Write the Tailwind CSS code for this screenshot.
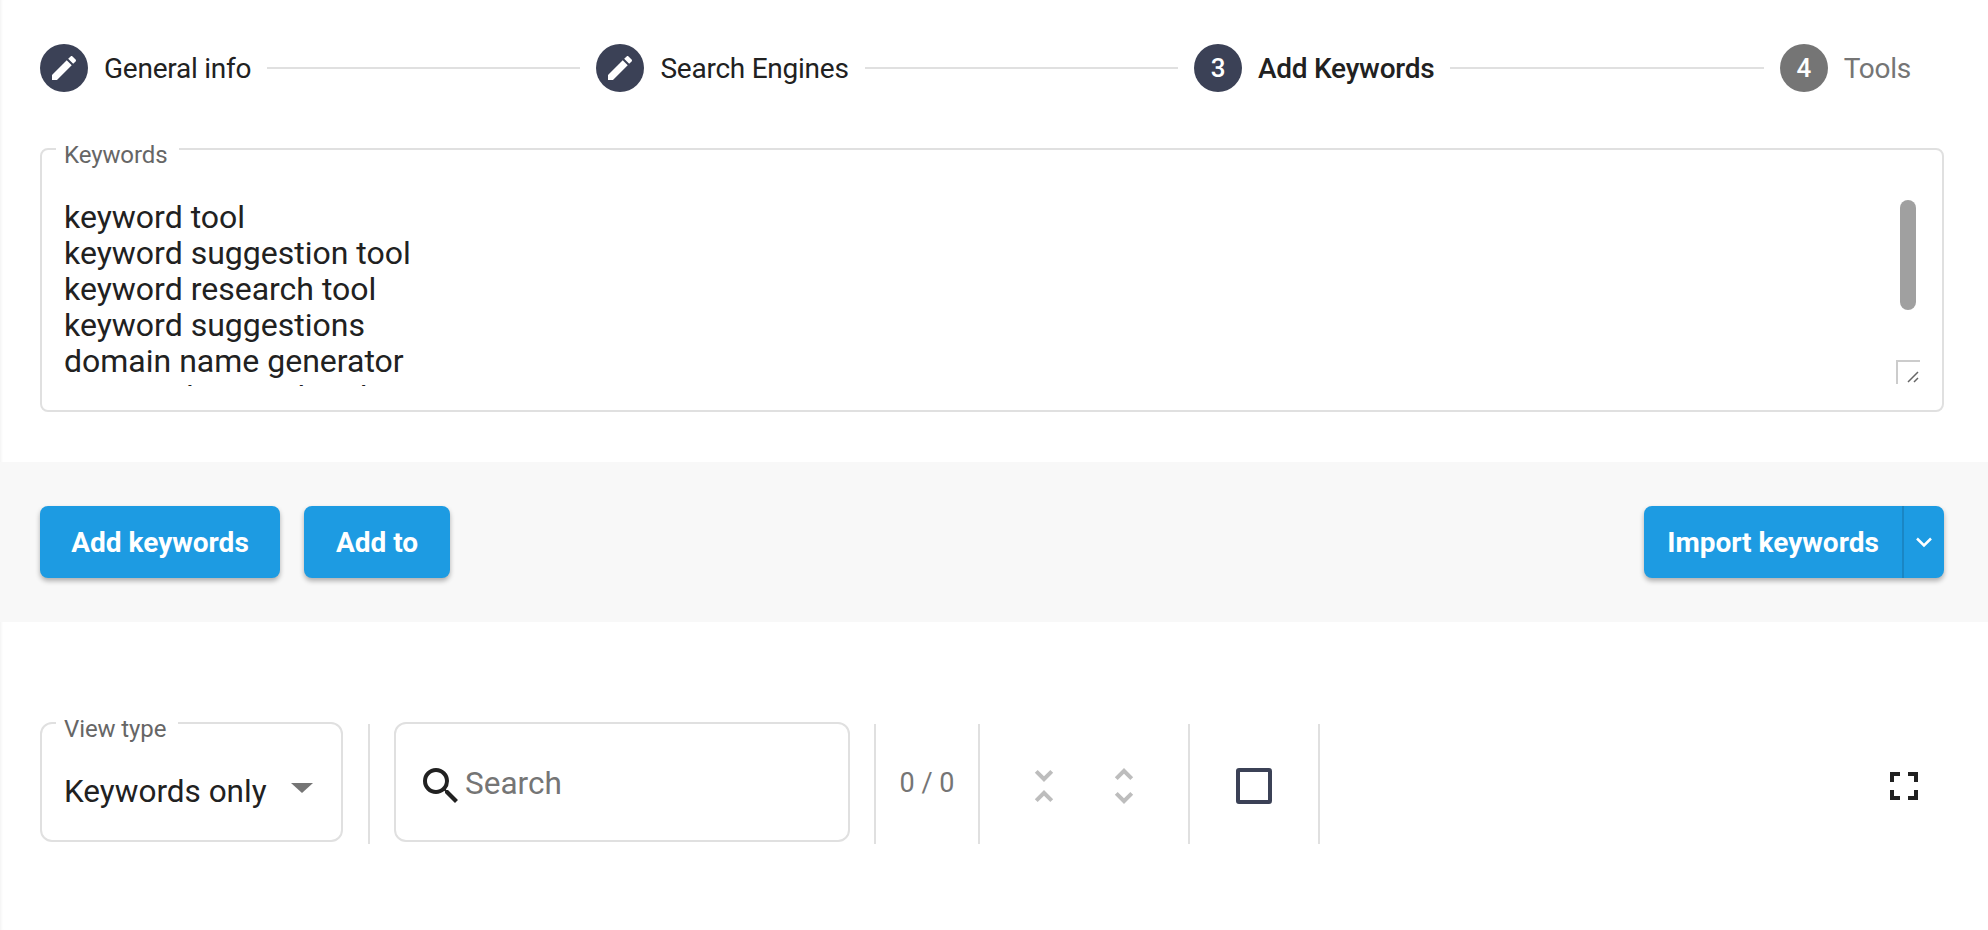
<!DOCTYPE html>
<html lang="en">
<head>
    <meta charset="UTF-8">
    <title>Add Keywords</title>
    <script src="https://cdn.jsdelivr.net/npm/@tailwindcss/browser@4"></script>
</head>
<body class="bg-white font-['Roboto',sans-serif] text-[#212121] h-[930px] overflow-hidden shadow-[inset_3px_0_3px_-2px_rgba(0,0,0,0.06)]">

    <!-- stepper -->
    <div class="flex items-center pt-[44px] pl-[40px] pr-[77px] text-[28px] tracking-[-0.25px]">
        <div class="flex items-center gap-4 shrink-0">
            <span class="w-12 h-12 rounded-full bg-[#3b4156] flex items-center justify-center">
                <svg class="w-8 h-8 fill-white" viewBox="0 0 24 24"><path d="M3 17.25V21h3.75L17.81 9.94l-3.75-3.75L3 17.25zM20.71 7.04c.39-.39.39-1.02 0-1.41l-2.34-2.34c-.39-.39-1.02-.39-1.41 0l-1.83 1.83 3.75 3.75 1.83-1.83z"/></svg>
            </span>
            <span class="pt-[2px]">General info</span>
        </div>
        <div class="flex-1 h-[2px] bg-[#e0e0e0] mx-4"></div>
        <div class="flex items-center gap-4 shrink-0">
            <span class="w-12 h-12 rounded-full bg-[#3b4156] flex items-center justify-center">
                <svg class="w-8 h-8 fill-white" viewBox="0 0 24 24"><path d="M3 17.25V21h3.75L17.81 9.94l-3.75-3.75L3 17.25zM20.71 7.04c.39-.39.39-1.02 0-1.41l-2.34-2.34c-.39-.39-1.02-.39-1.41 0l-1.83 1.83 3.75 3.75 1.83-1.83z"/></svg>
            </span>
            <span class="pt-[2px]">Search Engines</span>
        </div>
        <div class="flex-1 h-[2px] bg-[#e0e0e0] mx-4"></div>
        <div class="flex items-center gap-4 shrink-0">
            <span class="w-12 h-12 rounded-full bg-[#3b4156] text-white text-[26px] font-medium flex items-center justify-center">3</span>
            <span class="font-medium pt-[2px]">Add Keywords</span>
        </div>
        <div class="flex-1 h-[2px] bg-[#e0e0e0] mx-4"></div>
        <div class="flex items-center gap-4 shrink-0">
            <span class="w-12 h-12 rounded-full bg-[#757575] text-white text-[26px] font-medium flex items-center justify-center">4</span>
            <span class="text-[#757575] pt-[2px]">Tools</span>
        </div>
    </div>

    <!-- keywords textarea -->
    <div class="relative mt-[56px] ml-[40px] mr-[44px] h-[264px] border-2 border-[#e0e0e0] rounded-lg">
        <span class="absolute -top-[11px] left-[14px] pl-2 pr-3 bg-white text-[24px] tracking-[-0.1px] leading-[32px] text-[#666666]">Keywords</span>
        <div class="mt-[49px] ml-[22px] h-[187px] overflow-hidden text-[32px] leading-[36px] whitespace-pre">keyword tool
keyword suggestion tool
keyword research tool
keyword suggestions
domain name generator
amazon keyword tool</div>
        <div class="absolute top-[50px] right-[26px] w-4 h-[110px] rounded-lg bg-[#a0a0a0]"></div>
        <div class="absolute top-[210px] right-[22px] w-6 h-6 border-t-2 border-l-2 border-[#cccccc]">
            <svg class="w-full h-full stroke-[#666666]" viewBox="0 0 22 22"><path d="M10 20l10-10M16 20l4-4" stroke-width="1.5"/></svg>
        </div>
    </div>

    <!-- action band -->
    <div class="mt-[50px] h-[160px] bg-[#f8f8f8] flex items-center pl-[40px] pr-[44px] gap-6">
        <button class="h-[72px] w-[240px] pt-[2px] rounded-lg bg-[#1d9be2] text-white text-[28px] font-bold shadow-[0_3px_5px_rgba(0,0,0,0.3)]">Add keywords</button>
        <button class="h-[72px] w-[146px] pt-[2px] rounded-lg bg-[#1d9be2] text-white text-[28px] font-bold shadow-[0_3px_5px_rgba(0,0,0,0.3)]">Add to</button>
        <div class="ml-auto h-[72px] w-[300px] rounded-lg bg-[#1d9be2] text-white shadow-[0_3px_5px_rgba(0,0,0,0.3)] flex items-stretch">
            <span class="flex-1 flex items-center justify-center pt-[2px] text-[28px] font-bold border-r-2 border-[#1a86c4]">Import keywords</span>
            <span class="w-[40px] flex items-center justify-center">
                <svg class="w-6 h-6 stroke-white fill-none" viewBox="0 0 24 24"><path d="M5 8.5l7 7 7-7" stroke-width="2.5"/></svg>
            </span>
        </div>
    </div>

    <!-- toolbar -->
    <div class="mt-[100px] pl-[40px] h-[124px] flex items-start">
        <div class="relative w-[303px] h-[120px] border-2 border-[#e0e0e0] rounded-xl flex items-center justify-between pl-[23px] pr-[29px]">
            <span class="absolute -top-[11px] left-[14px] pl-2 pr-3 bg-white text-[24px] tracking-[-0.1px] leading-[32px] text-[#666666]">View type</span>
            <span class="text-[31.5px] mt-[20px] -ml-[1px]">Keywords only</span>
            <span class="w-0 h-0 border-x-[11px] border-x-transparent border-t-[10px] border-t-[#757575] mt-[12px] -mr-[1px]"></span>
        </div>
        <div class="w-[2px] h-[120px] bg-[#e0e0e0] ml-[25px] mt-[2px]"></div>
        <div class="ml-[24px] w-[456px] h-[120px] border-2 border-[#e0e0e0] rounded-xl flex items-center pl-[21px]">
            <svg class="w-12 h-12 fill-[#212121] mt-[8px] shrink-0" viewBox="0 0 24 24"><path d="M15.5 14h-.79l-.28-.27A6.471 6.471 0 0 0 16 9.5 6.5 6.5 0 1 0 9.5 16c1.61 0 3.09-.59 4.23-1.57l.27.28v.79l5 4.99L20.49 19l-4.99-5zm-6 0C7.01 14 5 11.99 5 9.5S7.01 5 9.5 5 14 7.01 14 9.5 11.99 14 9.5 14z"/></svg>
            <span class="text-[31.5px] text-[#757575] mt-[4px]">Search</span>
        </div>
        <div class="w-[2px] h-[120px] bg-[#e0e0e0] ml-[24px] mt-[2px]"></div>
        <div class="w-[102px] h-[120px] pt-[2px] flex items-center justify-center text-[27px] text-[#757575]">0 / 0</div>
        <div class="w-[2px] h-[120px] bg-[#e0e0e0] mt-[2px]"></div>
        <div class="w-[208px] h-[120px] mt-[4px] flex items-center justify-center gap-[32px]">
            <svg class="w-12 h-12 fill-[#bdbdbd]" viewBox="0 0 24 24"><path d="M7.41 18.59L8.83 20 12 16.83 15.17 20l1.41-1.41L12 14l-4.59 4.59zm9.18-13.18L15.17 4 12 7.17 8.83 4 7.41 5.41 12 10l4.59-4.59z"/></svg>
            <svg class="w-12 h-12 fill-[#bdbdbd]" viewBox="0 0 24 24"><path d="M12 5.83L15.17 9l1.41-1.41L12 3 7.41 7.59 8.83 9 12 5.83zm0 12.34L8.83 15l-1.41 1.41L12 21l4.59-4.59L15.17 15 12 18.17z"/></svg>
        </div>
        <div class="w-[2px] h-[120px] bg-[#e0e0e0] mt-[2px]"></div>
        <div class="w-[128px] h-[120px] mt-[4px] flex items-center justify-center">
            <span class="w-9 h-9 border-4 border-[#3b4156] rounded-[3px]"></span>
        </div>
        <div class="w-[2px] h-[120px] bg-[#e0e0e0] mt-[2px]"></div>
        <svg class="ml-auto mr-[60px] mt-[40px] w-12 h-12 fill-[#212121]" viewBox="0 0 24 24"><path d="M7 14H5v5h5v-2H7v-3zm-2-4h2V7h3V5H5v5zm12 7h-3v2h5v-5h-2v3zM14 5v2h3v3h2V5h-5z"/></svg>
    </div>
</body>
</html>
